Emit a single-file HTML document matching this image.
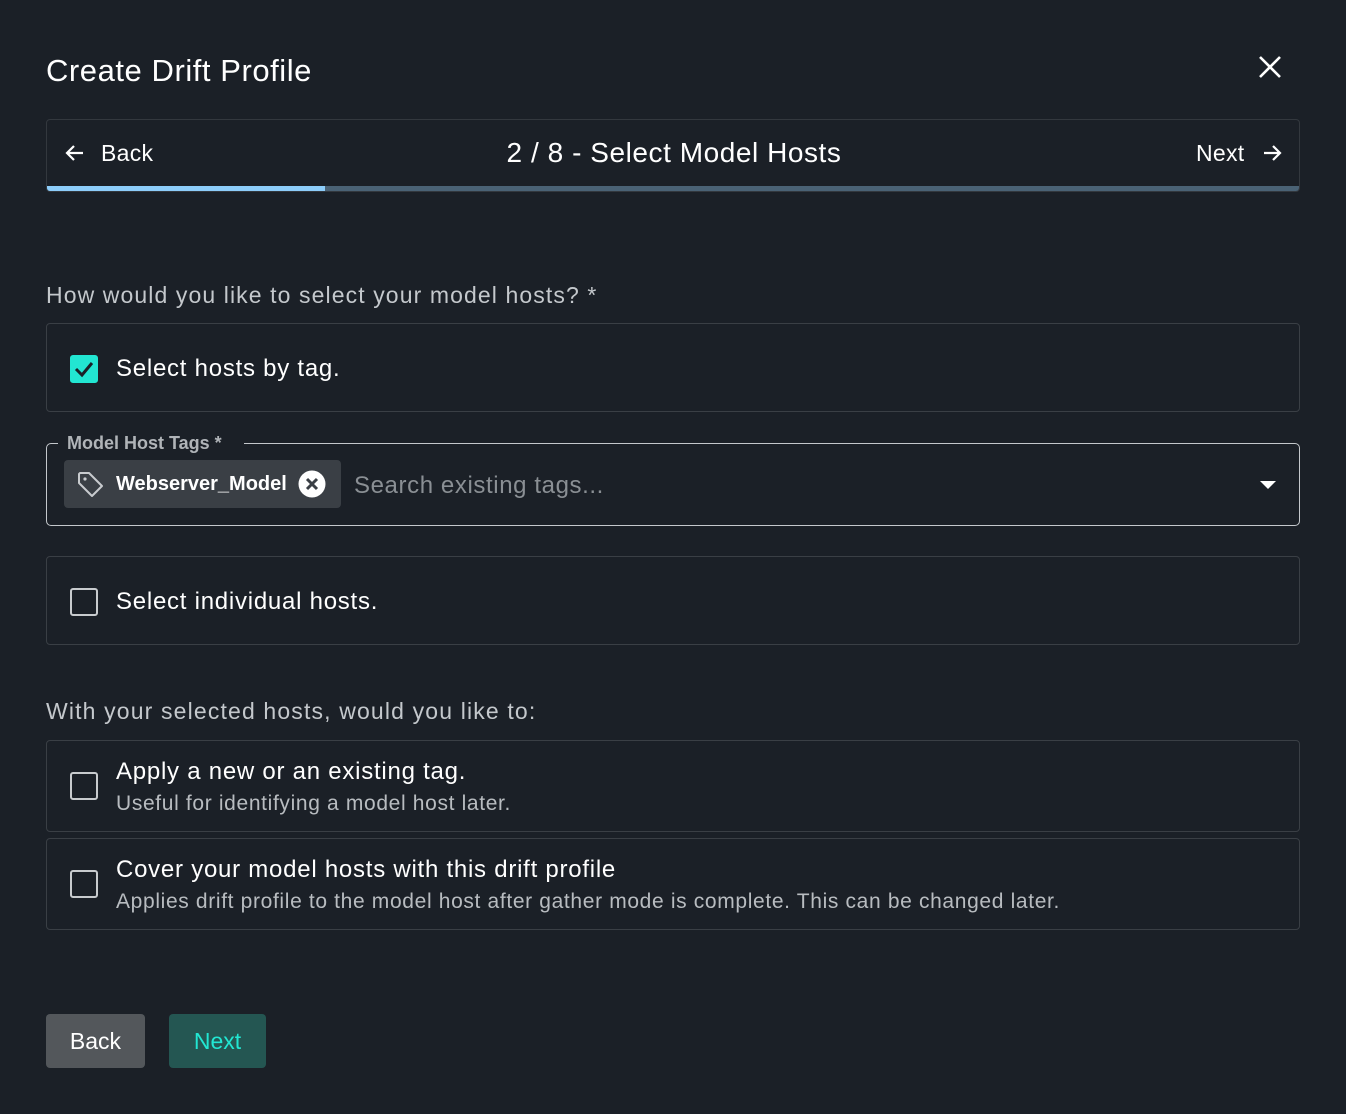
<!DOCTYPE html>
<html><head><style>
*{box-sizing:border-box;margin:0;padding:0}
body{width:1346px;height:1114px;background:#1b2027;font-family:"Liberation Sans",sans-serif;color:#fff;position:relative;overflow:hidden}
.a{position:absolute}
.box{position:absolute;left:46px;width:1254px;border:1px solid #3a3f45;border-radius:4px}
.cb{position:absolute;left:23px;width:28px;height:28px;border:2.5px solid #c8cbce;border-radius:3px}
.lbl{position:absolute;left:69px;font-size:24px;color:#fff;letter-spacing:0.75px}
.sub{position:absolute;left:69px;font-size:21px;color:#b8bcc0;letter-spacing:0.65px}
</style></head><body>
<div class="a" style="left:46px;top:53px;font-size:31px;letter-spacing:0.55px">Create Drift Profile</div>
<svg class="a" style="left:1258px;top:55px" width="24" height="24" viewBox="0 0 24 24"><path d="M2 2L22 22M22 2L2 22" stroke="#fff" stroke-width="2.6"/></svg>

<div class="a" style="left:46px;top:119px;width:1254px;height:73px;border:1px solid #33383e;border-radius:4px;overflow:hidden">
 <svg class="a" style="left:16px;top:21px" width="24" height="24" viewBox="0 0 24 24"><path d="M20 12H4M11 5L4 12L11 19" stroke="#fff" stroke-width="2.2" fill="none"/></svg>
 <div class="a" style="left:54px;top:20px;font-size:23px;letter-spacing:0.3px">Back</div>
 <div class="a" style="left:0;width:1254px;top:17px;text-align:center;font-size:28px;letter-spacing:0.55px">2 / 8 - Select Model Hosts</div>
 <div class="a" style="left:1149px;top:20px;font-size:23px;letter-spacing:0.3px">Next</div>
 <svg class="a" style="left:1213px;top:21px" width="24" height="24" viewBox="0 0 24 24"><path d="M4 12H20M13 5L20 12L13 19" stroke="#fff" stroke-width="2.2" fill="none"/></svg>
 <div class="a" style="left:0;top:66px;width:1254px;height:6px;background:#4a6275"></div>
 <div class="a" style="left:0;top:66px;width:278px;height:6px;background:#8dcdfa"></div>
</div>

<div class="a" style="left:46px;top:282px;font-size:23px;color:#c4c8cc;letter-spacing:1.1px">How would you like to select your model hosts? *</div>

<div class="box" style="top:323px;height:89px">
 <div class="cb" style="top:31px;background:#22e6d2;border-color:#22e6d2"><svg width="24" height="24" viewBox="0 0 24 24" style="position:absolute;left:-0.5px;top:-0.5px"><path d="M4 12L10 18L20 6" stroke="#1b2027" stroke-width="3" fill="none"/></svg></div>
 <div class="lbl" style="top:31px">Select hosts by tag.</div>
</div>

<div class="a" style="left:46px;top:443px;width:1254px;height:83px;border:1.5px solid #c4c8cc;border-radius:5px"></div>
<div class="a" style="left:58px;top:431px;background:#1b2027;padding:0 9px;width:186px;height:24px;font-size:18px;font-weight:bold;color:#b0b4b8;line-height:24px">Model Host Tags *</div>
<div class="a" style="left:64px;top:460px;width:277px;height:48px;background:#3a3f45;border-radius:4px">
 <svg class="a" style="left:12px;top:10px" width="30" height="30" viewBox="0 0 30 30"><path d="M3 4V13L16 26L26 16L13 3H4Z" stroke="#c8cbce" stroke-width="2" fill="none" stroke-linejoin="round"/><circle cx="9" cy="9" r="1.6" fill="#c8cbce"/></svg>
 <div class="a" style="left:52px;top:13px;font-size:20px;font-weight:bold">Webserver_Model</div>
 <svg class="a" style="left:234px;top:10px" width="28" height="28" viewBox="0 0 28 28"><circle cx="14" cy="14" r="13.5" fill="#fff"/><path d="M9 9L19 19M19 9L9 19" stroke="#3a3f45" stroke-width="3"/></svg>
</div>
<div class="a" style="left:354px;top:472px;font-size:24px;color:#8a8f94;letter-spacing:0.6px">Search existing tags...</div>
<svg class="a" style="left:1259px;top:480px" width="18" height="10" viewBox="0 0 18 10"><path d="M1 1H17L9 9Z" fill="#fff"/></svg>

<div class="box" style="top:556px;height:89px">
 <div class="cb" style="top:31px"></div>
 <div class="lbl" style="top:31px">Select individual hosts.</div>
</div>

<div class="a" style="left:46px;top:698px;font-size:23px;color:#c4c8cc;letter-spacing:1.15px">With your selected hosts, would you like to:</div>

<div class="box" style="top:740px;height:92px">
 <div class="cb" style="top:31px"></div>
 <div class="lbl" style="top:17px">Apply a new or an existing tag.</div>
 <div class="sub" style="top:51px">Useful for identifying a model host later.</div>
</div>
<div class="box" style="top:838px;height:92px">
 <div class="cb" style="top:31px"></div>
 <div class="lbl" style="top:17px">Cover your model hosts with this drift profile</div>
 <div class="sub" style="top:51px">Applies drift profile to the model host after gather mode is complete. This can be changed later.</div>
</div>

<div class="a" style="left:46px;top:1014px;width:99px;height:54px;background:#53575b;border-radius:4px;font-size:23px;text-align:center;line-height:54px">Back</div>
<div class="a" style="left:169px;top:1014px;width:97px;height:54px;background:#245652;border-radius:4px;font-size:23px;text-align:center;line-height:54px;color:#22e6d2">Next</div>
</body></html>
